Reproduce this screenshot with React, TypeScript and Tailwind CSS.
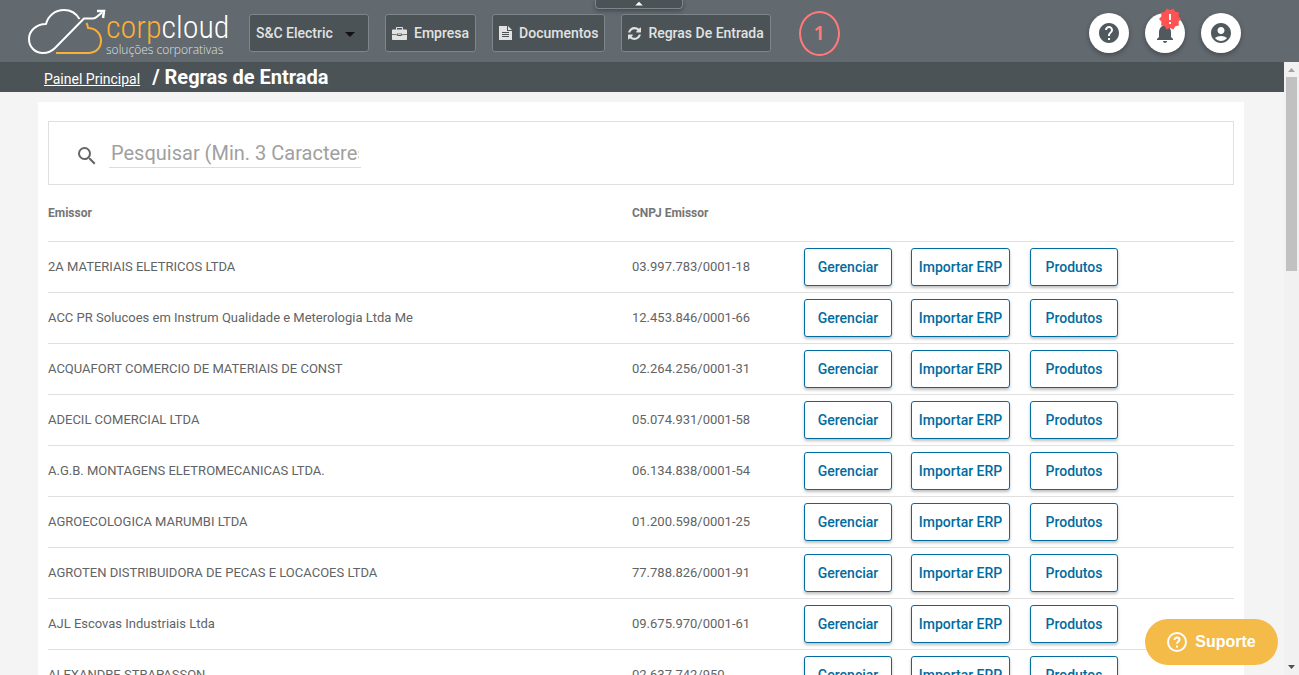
import { useState } from 'react';
import { MdAccountCircle, MdArrowDropDown, MdArrowDropUp, MdHelp, MdNewReleases, MdNotifications, MdSearch } from 'react-icons/md';

interface Emissor {
  nome: string;
  cnpj: string;
}

const emissores: Emissor[] = [
  { nome: '2A MATERIAIS ELETRICOS LTDA', cnpj: '03.997.783/0001-18' },
  { nome: 'ACC PR Solucoes em Instrum Qualidade e Meterologia Ltda Me', cnpj: '12.453.846/0001-66' },
  { nome: 'ACQUAFORT COMERCIO DE MATERIAIS DE CONST', cnpj: '02.264.256/0001-31' },
  { nome: 'ADECIL COMERCIAL LTDA', cnpj: '05.074.931/0001-58' },
  { nome: 'A.G.B. MONTAGENS ELETROMECANICAS LTDA.', cnpj: '06.134.838/0001-54' },
  { nome: 'AGROECOLOGICA MARUMBI LTDA', cnpj: '01.200.598/0001-25' },
  { nome: 'AGROTEN DISTRIBUIDORA DE PECAS E LOCACOES LTDA', cnpj: '77.788.826/0001-91' },
  { nome: 'AJL Escovas Industriais Ltda', cnpj: '09.675.970/0001-61' },
  { nome: 'ALEXANDRE STRAPASSON', cnpj: '02.637.742/950-' },
];

const navButton =
  'h-[38px] px-[6px] flex items-center gap-[7px] rounded-[3px] border border-[#7d868a] bg-[#4b5356] text-sm font-medium text-[#e2e2e2] whitespace-nowrap';
const roundButton =
  'relative size-10 rounded-full bg-white text-[#4f595e] flex items-center justify-center shadow-[0_2px_5px_rgba(0,0,0,0.3)]';
const rowButton =
  'h-[38px] block rounded-[3px] border border-[#006c9f] bg-white text-sm font-medium text-[#006c9f] whitespace-nowrap shadow-[0_2px_3px_rgba(0,0,0,0.25)]';

function Logo() {
  return (
    <a href="#" className="flex items-start w-[200px] h-[50px]" aria-label="corpcloud">
      <svg width="78" height="50" viewBox="0 0 78 50" fill="none" strokeWidth="2" strokeLinejoin="round" className="shrink-0">
        <path d="M51.500 13C48 7 42 4 36 4c-9 0-16 6-18 14C8 18 1 25 1 33s6 14 14 14c5 0 9-2 12-5L56 12.500h9c3 0 5-3 9-6" stroke="#fff" />
        <path d="M69 5h7l-1 7" stroke="#fff" strokeWidth="2.500" strokeLinejoin="miter" />
        <path d="M28 47h32c8 0 13-5 13-12.500S67 22 60 22c0-2-.5-3-1.500-5" stroke="#fbb034" />
      </svg>
      <span className="flex flex-col">
        <span className="mt-[6px] h-[30px] font-['Liberation_Sans_Narrow','Roboto_Condensed',Roboto,sans-serif] text-[32px] leading-[30px] font-light text-white">
          <span className="text-[#fbb034]">corp</span>cloud
        </span>
        <span className="mt-[2px] font-['Open_Sans',sans-serif] text-xs leading-[12px] font-light text-[#dfe1e2] whitespace-nowrap">
          soluções corporativas
        </span>
      </span>
    </a>
  );
}

function BriefcaseIcon() {
  return (
    <svg width="15" height="13" viewBox="0 0 15 13" fill="currentColor" className="shrink-0">
      <path
        d="M5 0h5c.6 0 1 .4 1 1v1.500h3c.6 0 1 .4 1 1V7c-2 .3-3.500.4-5.200.4V6.500H5.200v.9C3.500 7.400 2 7.300 0 7V3.500c0-.6.4-1 1-1h3V1c0-.6.4-1 1-1zm0 1v1.500h5V1z"
        fillRule="evenodd"
      />
      <path d="M6 6.800h3v1H6z" />
      <path d="M0 7.800c2 .3 3.500.4 5.200.4.200.6 1.200.9 2.300.9s2.100-.3 2.300-.9C11.500 8.200 13 8.100 15 7.800V12c0 .6-.4 1-1 1H1c-.6 0-1-.4-1-1z" />
    </svg>
  );
}

function FileIcon() {
  return (
    <svg width="13" height="14" viewBox="0 0 13 14" fill="currentColor" className="shrink-0">
      <path d="M0 0h8v5h5v9H0zM3 6v1h7V6zM3 8v1h7V8zM3 10v1h7v-1z" fillRule="evenodd" />
      <path d="M9 0l4 4H9z" />
    </svg>
  );
}

function RefreshIcon() {
  return (
    <svg width="13" height="13" viewBox="0 0 1536 1536" fill="currentColor" className="shrink-0">
      <path d="M1511 928q0 5-1 7-64 268-268 434.500T764 1536q-146 0-282.500-55T238 1324l-129 129q-19 19-45 19t-45-19-19-45V960q0-26 19-45t45-19h448q26 0 45 19t19 45-19 45l-137 137q71 66 161 102t187 36q134 0 250-65t186-179q11-17 53-117 8-23 30-23h192q13 0 22.500 9.500t9.500 22.500zm25-800v448q0 26-19 45t-45 19h-448q-26 0-45-19t-19-45 19-45l138-138Q969 256 768 256q-134 0-250 65T332 500q-11 17-53 117-8 23-30 23H50q-13 0-22.500-9.500T18 608v-7q65-268 270-434.500T768 0q146 0 284 55.500T1297 212l130-129q19-19 45-19t45 19 19 45z" />
    </svg>
  );
}

function Header() {
  return (
    <header className="relative h-[62px] shrink-0 bg-[#62696f] pl-7 pr-[58px] flex items-center">
      <Logo />
      <nav className="ml-[21px] mt-1 flex items-center gap-4">
        <div className="relative">
          <select
            aria-label="Empresa selecionada"
            className="h-[38px] w-[120px] appearance-none rounded-[3px] border border-[#7d868a] bg-[#4b5356] pl-[6px] text-sm font-medium text-[#e2e2e2]"
          >
            <option>S&amp;C Electric</option>
          </select>
          <MdArrowDropDown size={24} className="absolute right-[7px] top-2 text-[#111] pointer-events-none" />
        </div>
        <button className={navButton}>
          <BriefcaseIcon />
          Empresa
        </button>
        <button className={navButton}>
          <FileIcon />
          Documentos
        </button>
        <button className={navButton}>
          <RefreshIcon />
          Regras De Entrada
        </button>
        <span className="ml-3 w-[41px] h-[45px] rounded-[50%] border-2 border-[#ff7b7b] flex items-center justify-center font-['Noto_Sans',sans-serif] text-xl font-semibold text-[#ff7b7b]">
          1
        </span>
      </nav>
      <button
        aria-label="Recolher menu"
        className="absolute top-0 left-1/2 ml-[-55px] w-[88px] h-[9px] rounded-b border border-t-0 border-[#7d868a] bg-[#4b5356] text-white flex items-center justify-center shadow-[0_2px_4px_rgba(0,0,0,0.3)]"
      >
        <MdArrowDropUp size={18} className="shrink-0" />
      </button>
      <div className="ml-auto mt-1 flex gap-4">
        <button className={roundButton} aria-label="Ajuda">
          <MdHelp size={24} />
        </button>
        <button className={roundButton} aria-label="Notificações">
          <MdNotifications size={24} />
          <MdNewReleases size={24} className="absolute -top-[6px] right-[3px] text-[#ff5252]" />
        </button>
        <button className={roundButton} aria-label="Minha conta">
          <MdAccountCircle size={24} />
        </button>
      </div>
    </header>
  );
}

function Scrollbar() {
  return (
    <div className="w-[15px] shrink-0 bg-[#f1f1f1] flex flex-col items-center" aria-hidden="true">
      <svg width="15" height="15" viewBox="0 0 15 15" className="shrink-0">
        <path d="M4 10h7L7.500 6z" fill="#a3a3a3" />
      </svg>
      <div className="w-[11px] h-[194px] bg-[#c1c1c1]" />
      <svg width="15" height="15" viewBox="0 0 15 15" className="shrink-0 mt-auto">
        <path d="M4 5h7L7.500 9z" fill="#505050" />
      </svg>
    </div>
  );
}

export default function App() {
  const [busca, setBusca] = useState('');

  return (
    <div className="relative h-screen flex flex-col overflow-hidden bg-[#f4f4f4] font-[Roboto,sans-serif]">
      <Header />
      <div className="flex-1 min-h-0 flex">
        <div className="flex-1 min-w-0 overflow-hidden">
          <div className="h-[30px] pl-11 bg-[#4b5356] text-white flex items-baseline gap-3">
            <a href="#" className="text-sm underline">Painel Principal</a>
            <h1 className="text-xl leading-[30px] font-bold">/ Regras de Entrada</h1>
          </div>

          <main className="mt-[10px] ml-[38px] mr-10 px-[10px] pt-[19px] bg-white">
            <div className="h-16 border border-[#e0e0e0] flex items-center pl-[26px]">
              <label htmlFor="busca" aria-label="Pesquisar">
                <MdSearch size={24} className="mt-[6px] text-[#666]" />
              </label>
              <input
                id="busca"
                value={busca}
                onChange={e => setBusca(e.target.value)}
                placeholder="Pesquisar (Min. 3 Caracteres)"
                className="ml-[10px] w-[252px] h-[30px] px-[2px] border-b border-[#dcdcdc] text-xl text-[#555] placeholder:text-[#a0a0a0] outline-none"
              />
            </div>

            <table className="w-full table-fixed border-collapse text-left text-[13px] text-[#5f6466]">
              <colgroup>
                <col />
                <col className="w-[172px]" />
                <col className="w-[107px]" />
                <col className="w-[119px]" />
                <col className="w-[204px]" />
              </colgroup>
              <thead>
                <tr className="h-14 border-b border-[#e0e0e0] text-xs text-[#757575]">
                  <th className="p-0 font-bold">Emissor</th>
                  <th className="p-0 font-bold">CNPJ Emissor</th>
                  <th colSpan={3} />
                </tr>
              </thead>
              <tbody>
                {emissores.map(emissor => (
                  <tr key={emissor.nome} className="h-[51px] border-b border-[#e0e0e0]">
                    <td>{emissor.nome}</td>
                    <td>{emissor.cnpj}</td>
                    <td>
                      <button className={`${rowButton} w-[88px]`}>Gerenciar</button>
                    </td>
                    <td>
                      <button className={`${rowButton} w-[99px]`}>Importar ERP</button>
                    </td>
                    <td>
                      <button className={`${rowButton} w-[88px]`}>Produtos</button>
                    </td>
                  </tr>
                ))}
              </tbody>
            </table>
          </main>
        </div>
        <Scrollbar />
      </div>

      <button className="absolute right-[21px] bottom-[10px] h-[46px] w-[133px] rounded-full bg-[#f5bb48] text-white flex items-center justify-center gap-2 font-['Liberation_Sans',sans-serif] text-base font-bold">
        <svg width="20" height="20" viewBox="0 0 20 20" fill="none" stroke="currentColor" strokeWidth="2">
          <circle cx="10" cy="10" r="9" />
          <path d="M7.500 8c0-1.600 1.100-2.500 2.500-2.500s2.500.9 2.500 2.200c0 1.800-2.500 1.900-2.500 4" />
          <path d="M10 13.500v2" />
        </svg>
        Suporte
      </button>
    </div>
  );
}
